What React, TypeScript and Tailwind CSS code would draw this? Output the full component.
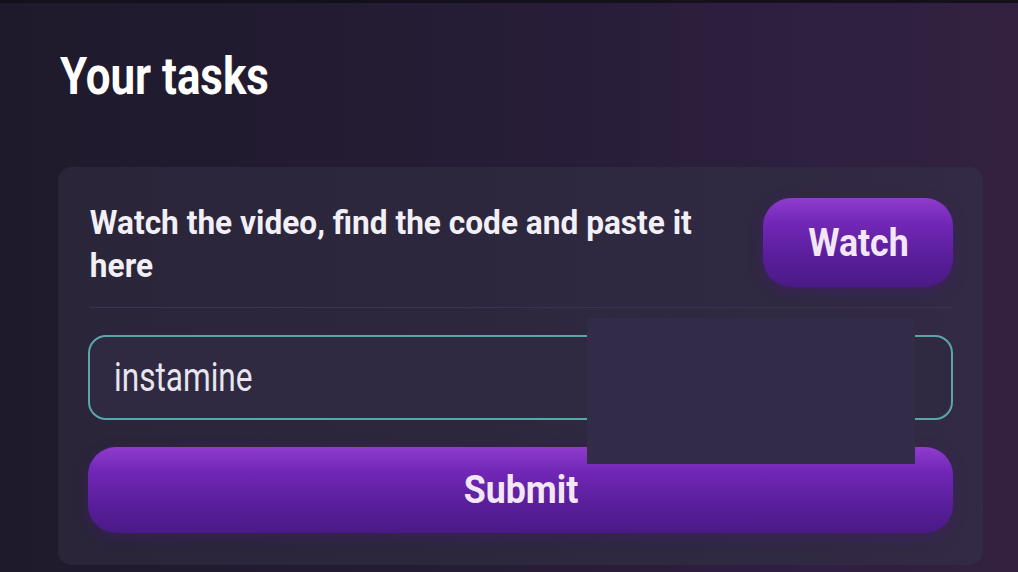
import React from "react"

const font = { fontFamily: "Roboto, 'Liberation Sans', sans-serif" }

function GradientButton({ label, className }: { label: string; className?: string }) {
  return (
    <button
      className={
        "flex items-center justify-center rounded-[28px] bg-[linear-gradient(180deg,#8f3ccd_0%,#7227b6_28%,#5a1e9c_65%,#4a1a86_100%)] shadow-[0_4px_14px_rgba(80,20,140,0.35)] " +
        (className ?? "")
      }
    >
      <span className="inline-block origin-center scale-x-[0.94] text-[38px] font-bold leading-none text-[#f3e6f6]">
        {label}
      </span>
    </button>
  )
}

export default function App() {
  return (
    <div
      style={font}
      className="h-[572px] w-[1018px] overflow-hidden border-t-[3px] border-[#15111c] bg-[linear-gradient(90deg,#1e1a2b_0%,#251c35_45%,#2e2040_80%,#33213f_100%)]"
    >
      <h1 className="ml-[60px] mt-[48px] origin-left scale-x-[0.86] text-[51px] font-bold leading-none text-white">
        Your tasks
      </h1>

      <div className="relative ml-[58px] mt-[65px] flex h-[398px] w-[925px] flex-col rounded-[14px] bg-[linear-gradient(90deg,#2a2539_0%,#2e2840_60%,#332a45_100%)] px-[30px] pb-[32px] pt-[31px]">
        <div className="flex items-start justify-between">
          <p className="mt-[3px] w-[660px] origin-left scale-x-[0.93] pl-[2px] text-[34px] font-bold leading-[43px] text-[#f2f0f6]">
            Watch the video, find the code and paste it here
          </p>
          <GradientButton label="Watch" className="h-[89px] w-[190px] shrink-0" />
        </div>

        <div className="mx-[2px] mt-[20px] h-px bg-[#3a3450]" />

        <div className="mt-[27px] flex h-[85px] items-center rounded-[18px] border-2 border-[#5aa6a8] bg-[#2f2a42] pl-[24px]">
          <span className="inline-block origin-left scale-x-[0.79] text-[40px] leading-none text-[#e9e5ef]">
            instamine
          </span>
        </div>

        <GradientButton label="Submit" className="mt-[27px] h-[86px] w-full" />

        <div className="absolute left-[529px] top-[151px] h-[146px] w-[328px] bg-[#332c48]" />
      </div>
    </div>
  )
}
